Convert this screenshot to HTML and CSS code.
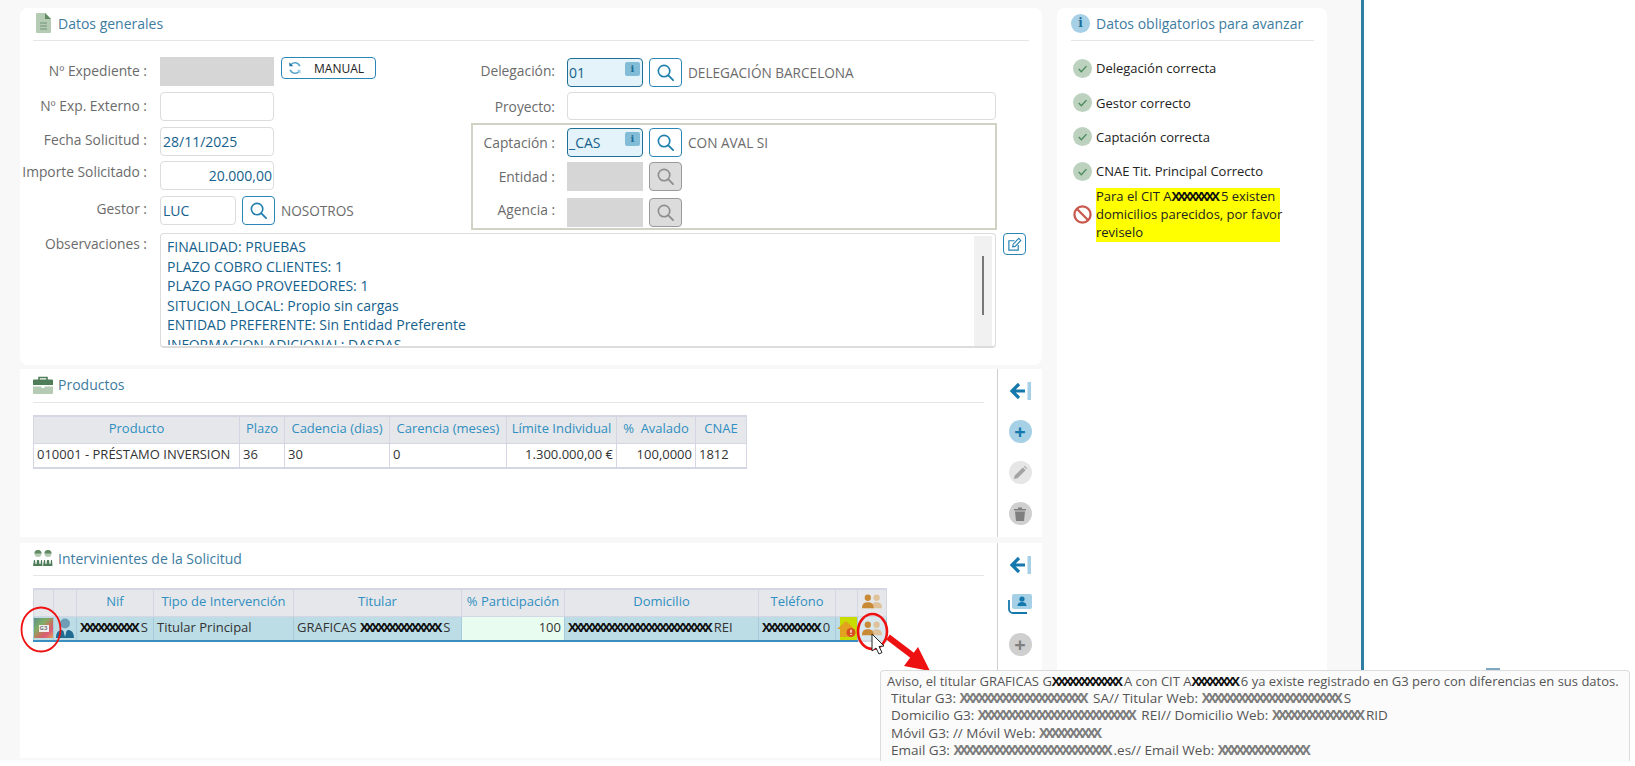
FILE: index.html
```html
<!DOCTYPE html>
<html lang="es">
<head>
  <meta charset="UTF-8" />
  <title>Solicitud</title>
  <link rel="stylesheet" href="styles.css">
</head>
<body>
  <svg class="defs" width="0" height="0">
    <defs>
      <symbol id="i-search" viewBox="0 0 20 20">
        <circle cx="8.5" cy="8.5" r="6" fill="none" stroke="currentColor" stroke-width="1.7"/>
        <path d="M13 13l5 5" stroke="currentColor" stroke-width="1.9" stroke-linecap="round"/>
      </symbol>
      <symbol id="i-check" viewBox="0 0 20 20">
        <circle cx="10" cy="10" r="10" fill="#bcd2bf"/>
        <path d="M6 10.5l2.8 2.8L14.2 7.5" fill="none" stroke="#4d8a5c" stroke-width="1.5"/>
      </symbol>
      <symbol id="i-back" viewBox="0 0 24 22">
        <path d="M11 4l-7 7 7 7M4 11h13" fill="none" stroke="#1578ad" stroke-width="3.2"/>
        <rect x="19.5" y="2" width="3.5" height="18" fill="#a5d0e6"/>
      </symbol>
      <symbol id="i-people" viewBox="0 0 24 18">
        <circle cx="17.500" cy="4.5" r="3.8" fill="#dfc29b"/>
        <path d="M11 17c0-5 2.500-7 6.500-7s6.500 2 6.500 7z" fill="#dfc29b"/>
        <circle cx="7" cy="4.500" r="3.800" fill="#c98a35"/>
        <path d="M0 17c0-5 2.500-7 7-7s7 2 7 7z" fill="#c98a35"/>
      </symbol>
    </defs>
  </svg>

  <div class="workspace">
    <div class="main-col">

      <section class="card card-general">
        <div class="card-title">
          <svg class="title-icon" width="15" height="20" viewBox="0 0 15 20"><path d="M1 0h8l6 6v13a1 1 0 0 1-1 1H1a1 1 0 0 1-1-1V1a1 1 0 0 1 1-1z" fill="#b5cbb4"/><path d="M9 0l6 6H9z" fill="#5f8a62"/><path d="M4 10h7M4 13h7M4 16h7" stroke="#6f9572" stroke-width="1"/></svg>
          Datos generales
        </div>

        <div class="form-top">
          <div class="form-left">
            <div class="field">
              <label class="lift-2">Nº Expediente :</label>
              <div class="input disabled w-full"></div>
              <div class="btn-manual">
                <svg width="14" height="14" viewBox="0 0 16 16"><path d="M13.500 6A6 6 0 0 0 3 4.500M2.500 10A6 6 0 0 0 13 11.500" fill="none" stroke="#5aa6cc" stroke-width="1.800"/><path d="M1.500 1.500v4.500h4.500z" fill="#1f77a8"/><path d="M14.500 14.500V10H10z" fill="#a9d2e6"/></svg>
                <span>MANUAL</span>
              </div>
            </div>
            <div class="field">
              <label class="lift-2">Nº Exp. Externo :</label>
              <div class="input w-full"></div>
            </div>
            <div class="field">
              <label class="lift-4">Fecha Solicitud :</label>
              <div class="input w-full">28/11/2025</div>
            </div>
            <div class="field">
              <label class="lift-8">Importe Solicitado :</label>
              <div class="input w-full right">20.000,00</div>
            </div>
            <div class="field">
              <label class="lift-4">Gestor :</label>
              <div class="input w-code">LUC</div>
              <div class="btn-search"><svg width="19" height="19"><use href="#i-search"/></svg></div>
              <span class="desc">NOSOTROS</span>
            </div>
          </div>

          <div class="form-right">
            <div class="field field-r">
              <label class="lift-4">Delegación:</label>
              <div class="input focus">01<span class="info-badge">i</span></div>
              <div class="btn-search"><svg width="19" height="19"><use href="#i-search"/></svg></div>
              <span class="desc">DELEGACIÓN BARCELONA</span>
            </div>
            <div class="field field-r field-proyecto">
              <label>Proyecto:</label>
              <div class="input grow"></div>
            </div>
            <div class="captacion">
              <div class="field field-r">
                <label>Captación :</label>
                <div class="input focus">_CAS<span class="info-badge">i</span></div>
                <div class="btn-search"><svg width="19" height="19"><use href="#i-search"/></svg></div>
                <span class="desc">CON AVAL SI</span>
              </div>
              <div class="field field-r">
                <label>Entidad :</label>
                <div class="input disabled w-code-r"></div>
                <div class="btn-search off"><svg width="19" height="19"><use href="#i-search"/></svg></div>
              </div>
              <div class="field field-r field-agencia">
                <label class="lift-6">Agencia :</label>
                <div class="input disabled w-code-r"></div>
                <div class="btn-search off"><svg width="19" height="19"><use href="#i-search"/></svg></div>
              </div>
            </div>
          </div>
        </div>

        <div class="obs-row">
          <label>Observaciones :</label>
          <div class="obs-box">
            <div class="obs-text">
              FINALIDAD: PRUEBAS<br>
              PLAZO COBRO CLIENTES: 1<br>
              PLAZO PAGO PROVEEDORES: 1<br>
              SITUCION_LOCAL: Propio sin cargas<br>
              ENTIDAD PREFERENTE: Sin Entidad Preferente<br>
              INFORMACION ADICIONAL: DASDAS
            </div>
            <div class="obs-scroll"><div class="obs-thumb"></div></div>
          </div>
          <div class="btn-edit">
            <svg width="15" height="15" viewBox="0 0 16 16"><path d="M12 8.500V14H2V4h6" fill="none" stroke="#2a86b5" stroke-width="1.300"/><path d="M6 10.500l.6-2.800L12.500 1.500l2.200 2.200L8.800 10z" fill="none" stroke="#2a86b5" stroke-width="1.200"/></svg>
          </div>
        </div>
      </section>

      <section class="card card-products with-rail">
        <div class="card-main">
          <div class="card-title title-tall">
            <svg class="title-icon" width="20" height="18" viewBox="0 0 20 18"><path d="M6 4V1.500h8V4" fill="none" stroke="#4f7d58" stroke-width="1.600"/><path d="M1 3.500h18a1 1 0 0 1 1 1V9H0V4.500a1 1 0 0 1 1-1z" fill="#4f7d58"/><path d="M0 10.500h8.500v1.500h3v-1.500H20V17a1 1 0 0 1-1 1H1a1 1 0 0 1-1-1z" fill="#b5cbb4"/></svg>
            Productos
          </div>
          <table class="grid grid-products">
            <tr>
              <th class="p1">Producto</th><th class="p2">Plazo</th><th class="p3">Cadencia (dias)</th><th class="p4">Carencia (meses)</th><th class="p5">Límite Individual</th><th class="p6">%&nbsp; Avalado</th><th class="p7">CNAE</th>
            </tr>
            <tr>
              <td>010001 - PRÉSTAMO INVERSION</td><td>36</td><td>30</td><td>0</td><td class="right">1.300.000,00 €</td><td class="right">100,0000</td><td>1812</td>
            </tr>
          </table>
        </div>
        <div class="rail">
          <svg width="24" height="22"><use href="#i-back"/></svg>
          <div class="round add">+</div>
          <div class="round light">
            <svg width="13" height="13" viewBox="0 0 14 14"><path d="M0 14l.8-3.800L9.500 1.500l3 3L3.800 13.200zM10.500.5l1-.5 2.500 2.500-.5 1z" fill="#a3a3a3"/></svg>
          </div>
          <div class="round mid">
            <svg width="12" height="14" viewBox="0 0 12 14"><path d="M0 2h4V.5h4V2h4v1.500H0zM1 4.500h10L10 14H2z" fill="#7f7f7f"/></svg>
          </div>
        </div>
      </section>

      <section class="card card-people with-rail">
        <div class="card-main">
          <div class="card-title">
            <svg class="title-icon" width="20" height="16" viewBox="0 0 20 16"><circle cx="5" cy="3.500" r="3.500" fill="#b5cbb4"/><circle cx="15" cy="3.500" r="3.500" fill="#b5cbb4"/><path d="M1.500 3.500a3.500 3.500 0 0 1 7 0zM11.500 3.500a3.500 3.500 0 0 1 7 0z" fill="#5f8a62"/><path d="M0 16l1-6h1l.5 4h1l.5-4h2l.5 4h1l.5-4h1l.5 6zM10 16l1-6h1l.5 4h1l.5-4h2l.5 4h1l.5-4h1l.5 6z" fill="#4f7d58"/></svg>
            Intervinientes de la Solicitud
          </div>
          <table class="grid grid-people">
            <tr>
              <th class="h1"></th><th class="h2"></th><th class="h3">Nif</th><th class="h4">Tipo de Intervención</th><th class="h5">Titular</th><th class="h6">% Participación</th><th class="h7">Domicilio</th><th class="h8">Teléfono</th><th class="h9"></th>
              <th class="h10"><svg class="people-icon" width="20" height="15"><use href="#i-people"/></svg></th>
            </tr>
            <tr class="selected">
              <td class="icon-cell"><div class="g3-tile"><span>G3</span></div></td>
              <td class="icon-cell">
                <svg width="18" height="20" viewBox="0 0 18 20"><circle cx="9" cy="5.500" r="5" fill="#6f9db5"/><path d="M0 20c0-6 3-8 6-8l1.500 1L9 19l1.500-6 1.500-1c3 0 6 2 6 8z" fill="#1f6b94"/></svg>
              </td>
              <td><span class="redact">XXXXXXXXXX</span>S</td>
              <td>Titular Principal</td>
              <td>GRAFICAS <span class="redact">XXXXXXXXXXXXXX</span>S</td>
              <td class="right pct">100</td>
              <td><span class="redact">XXXXXXXXXXXXXXXXXXXXXXXXX</span>REI</td>
              <td><span class="redact">XXXXXXXXXX</span>0</td>
              <td class="icon-cell">
                <div class="home-mark">
                  <svg width="20" height="18" viewBox="0 0 20 18"><path d="M0 9l9-8 7 6.500V17H3V9z" fill="#e2a21f"/><circle cx="14" cy="12.500" r="4.500" fill="#d8501f"/><path d="M14 9.800v3M14 14v1" stroke="#fff" stroke-width="1.300"/></svg>
                </div>
              </td>
              <td class="icon-cell hover-cell"><svg class="people-icon" width="20" height="15"><use href="#i-people"/></svg></td>
            </tr>
          </table>
        </div>
        <div class="rail">
          <svg width="24" height="22"><use href="#i-back"/></svg>
          <svg class="contact-icon" width="24" height="20" viewBox="0 0 24 20"><rect x="4" y="0" width="20" height="15" rx="2" fill="#a5d0e6"/><circle cx="14" cy="5" r="2.600" fill="#1578ad"/><path d="M9.500 12c0-3 2-4 4.500-4s4.500 1 4.500 4z" fill="#1578ad"/><path d="M1 6v9a4 4 0 0 0 4 4h14" fill="none" stroke="#1578ad" stroke-width="1.800"/></svg>
          <div class="round mid plus-off">+</div>
        </div>
      </section>
    </div>

    <aside class="card card-required">
      <div class="card-title">
        <span class="info-round">i</span>
        Datos obligatorios para avanzar
      </div>
      <ul class="checks">
        <li><svg width="19" height="19"><use href="#i-check"/></svg>Delegación correcta</li>
        <li><svg width="19" height="19"><use href="#i-check"/></svg>Gestor correcto</li>
        <li><svg width="19" height="19"><use href="#i-check"/></svg>Captación correcta</li>
        <li><svg width="19" height="19"><use href="#i-check"/></svg>CNAE Tit. Principal Correcto</li>
        <li class="warn">
          <svg width="19" height="19" viewBox="0 0 20 20"><circle cx="10" cy="10" r="8.500" fill="none" stroke="#c9594f" stroke-width="2.400"/><path d="M4 4l12 12" stroke="#c9594f" stroke-width="2.400"/></svg>
          <div class="warn-text"><div class="warn-lines">Para el CIT A<span class="redact">XXXXXXXX</span>5 existen<br>domicilios parecidos, por favor<br>reviselo</div></div>
        </li>
      </ul>
    </aside>
  </div>

  <svg class="annotations" width="1635" height="766" viewBox="0 0 1635 766">
    <ellipse cx="41" cy="629.500" rx="19.500" ry="22" fill="none" stroke="#ee1111" stroke-width="1.800"/>
    <ellipse cx="872.500" cy="631.500" rx="14.500" ry="17.500" fill="none" stroke="#ee1111" stroke-width="2.600"/>
    <path d="M888 637l29 22" stroke="#ee1111" stroke-width="6"/>
    <path d="M930 671l-26-5 14-19z" fill="#ee1111"/>
    <path d="M872 634v17l4-3 3 6 3-1.500-3-6 5-.5z" fill="#fff" stroke="#222" stroke-width="1"/>
    <rect x="1486" y="668" width="14" height="2" fill="#7fa9c2"/>
  </svg>

  <div class="tooltip">
    <div class="tip-first">Aviso, el titular GRAFICAS G<span class="redact">XXXXXXXXXXXX</span>A con CIT A<span class="redact">XXXXXXXX</span>6 <span class="tip-tail">ya existe registrado en G3 pero con diferencias en sus datos.</span></div>
    <div>Titular G3: <span class="redact soft">XXXXXXXXXXXXXXXXXXXXX</span> SA// Titular Web: <span class="redact soft">XXXXXXXXXXXXXXXXXXXXXXX</span>S</div>
    <div>Domicilio G3: <span class="redact soft">XXXXXXXXXXXXXXXXXXXXXXXXXX</span> REI// Domicilio Web: <span class="redact soft">XXXXXXXXXXXXXXX</span>RID</div>
    <div>Móvil G3: // Móvil Web: <span class="redact soft">XXXXXXXXXX</span></div>
    <div>Email G3: <span class="redact soft">XXXXXXXXXXXXXXXXXXXXXXXXXX</span>.es// Email Web: <span class="redact soft">XXXXXXXXXXXXXXX</span></div>
  </div>
</body>
</html>
```

FILE: styles.css
```css
* {
  box-sizing: border-box;
}

body {
  margin: 0;
  width: 1635px;
  height: 766px;
  overflow: hidden;
  position: relative;
  background-color: #ffffff;
  font-family: "Open Sans", Arial, sans-serif;
  font-size: 14px;
  color: #333;
}

.defs {
  position: absolute;
}

.workspace {
  display: flex;
  width: 1364px;
  height: 760px;
  padding: 8px 0 0 20px;
  background-color: #f8f8f8;
  border-right: 3px solid #2f7fa5;
}

.main-col {
  width: 1022px;
  display: flex;
  flex-direction: column;
}

.card {
  background-color: #ffffff;
}

.card-title {
  display: flex;
  align-items: center;
  gap: 5px;
  height: 33px;
  padding-bottom: 2px;
  color: #3d7c9f;
  font-size: 14px;
  border-bottom: 1px solid #e6e6e6;
}

.title-tall {
  height: 34px;
}

.title-icon {
  flex-shrink: 0;
}

/* datos generales */
.card-general {
  height: 357px;
  padding: 0 13px;
  border-radius: 8px;
}

.card-general .card-title {
  gap: 7px;
  padding-left: 3px;
}

.form-top {
  display: flex;
  margin: 16px 0 0 -13px;
}

.form-left {
  width: 451px;
  display: flex;
  flex-direction: column;
  gap: 5.75px;
}

.form-right {
  width: 526px;
  padding-top: 1px;
  display: flex;
  flex-direction: column;
}

.field {
  display: flex;
  align-items: center;
  height: 29px;
}

.field label,
.obs-row label {
  width: 127px;
  margin-right: 13px;
  text-align: right;
  color: #6b6b6b;
  font-size: 13.800px;
  white-space: nowrap;
}

.lift-2 { padding-bottom: 2px; }
.lift-4 { padding-bottom: 4px; }
.lift-6 { padding-bottom: 6px; }
.lift-8 { padding-bottom: 8px; }

.field-r label {
  width: 84px;
  margin-right: 12px;
}

.captacion .field-r label {
  width: 82px;
}

.input {
  height: 29px;
  padding: 0 1px 0 2px;
  display: flex;
  align-items: center;
  background-color: #fff;
  border: 1px solid #dcdcdc;
  border-radius: 4px;
  color: #15618c;
  position: relative;
}

.w-full {
  width: 114px;
}

.w-code {
  width: 76px;
}

.w-code-r {
  width: 76px;
}

.grow {
  flex: 1;
}

.right {
  justify-content: flex-end;
  text-align: right;
}

.disabled {
  background-color: #d6d6d6;
  border-color: #d6d6d6;
  border-radius: 0;
}

.focus {
  width: 76px;
  padding: 0 1px;
  background-color: #e3f3f9;
  border: 1px solid #1f6f96;
  color: #15618c;
}

.info-badge {
  position: absolute;
  right: 2px;
  top: 3px;
  width: 15px;
  height: 14px;
  background-color: #83bcd6;
  border-radius: 2px;
  color: #1f6f96;
  font-family: "DejaVu Serif", serif;
  font-size: 10px;
  font-weight: bold;
  line-height: 14px;
  text-align: center;
}

.btn-manual {
  width: 95px;
  height: 22px;
  margin: -7px 0 0 7px;
  padding-left: 6px;
  display: flex;
  align-items: center;
  border: 1px solid #2a86b5;
  border-radius: 4px;
  color: #222;
  font-size: 12px;
}

.btn-manual span {
  margin-left: 12px;
}

.btn-search {
  width: 33px;
  height: 29px;
  margin-left: 6px;
  display: flex;
  align-items: center;
  justify-content: center;
  border: 1px solid #2a86b5;
  border-radius: 4px;
  color: #1f7fae;
}

.btn-search.off {
  background-color: #dcdcdc;
  border-color: #9a9a9a;
  color: #8d8d8d;
}

.desc {
  margin-left: 6px;
  color: #6b6b6b;
  font-size: 13.600px;
  white-space: nowrap;
}

.field-proyecto {
  height: 28px;
  margin-top: 5px;
}

.field-proyecto .input {
  height: 28px;
  margin-right: 1px;
}

.captacion {
  height: 107px;
  margin-top: 3px;
  padding: 3px 0 0;
  display: flex;
  flex-direction: column;
  gap: 5px;
  border: 2px solid #d2d2c4;
}

.field-agencia {
  margin-top: 2px;
}

.obs-row {
  display: flex;
  margin: 3px 0 0 -13px;
}

.obs-row label {
  line-height: 22px;
}

.obs-box {
  width: 836px;
  height: 115px;
  padding: 2px 3px 2px 6px;
  display: flex;
  justify-content: space-between;
  border: 1px solid #dcdcdc;
  border-bottom-width: 2px;
  border-radius: 4px;
}

.obs-text {
  height: 109px;
  overflow: hidden;
  color: #15618c;
  line-height: 19.500px;
  padding-top: 1px;
  white-space: nowrap;
}

.obs-scroll {
  width: 18px;
  height: 110px;
  padding: 20px 0 0 8px;
  background-color: #f1f1f1;
}

.obs-thumb {
  width: 2px;
  height: 59px;
  background-color: #777;
}

.btn-edit {
  width: 23px;
  height: 22px;
  margin-left: 7px;
  display: flex;
  align-items: center;
  justify-content: center;
  border: 1px solid #2a86b5;
  border-radius: 4px;
}

/* productos e intervinientes */
.with-rail {
  display: flex;
}

.card-products {
  height: 168px;
  margin-top: 4px;
}

.card-people {
  height: 215px;
  margin-top: 6px;
}

.card-main {
  width: 977px;
  padding: 0 13px;
}

.rail {
  width: 45px;
  padding-top: 11px;
  display: flex;
  flex-direction: column;
  align-items: center;
  gap: 18px;
  border-left: 1px solid #cfcfcf;
}

.round {
  width: 23px;
  height: 23px;
  border-radius: 50%;
  display: flex;
  align-items: center;
  justify-content: center;
  font-size: 20px;
  font-weight: bold;
  line-height: 1;
}

.add {
  background-color: #a5d0e6;
  color: #1578ad;
}

.light {
  background-color: #e6e6e6;
}

.mid {
  background-color: #cfcfcf;
}

.plus-off {
  color: #7f7f7f;
  margin-top: 1px;
}

.grid {
  margin-top: 12px;
  border-collapse: collapse;
  table-layout: fixed;
  border: 1px solid #d5d6e4;
  border-top-width: 2px;
  border-bottom-width: 2px;
  font-size: 13px;
}

.grid-products {
  width: 713px;
}

.grid-people {
  width: 853px;
}

.grid th {
  height: 27px;
  padding: 0 0 3px;
  background-color: #e6e7eb;
  border: 1px solid #d5d6e4;
  color: #2f8fc0;
  font-weight: normal;
  white-space: nowrap;
}

.grid td {
  height: 25px;
  padding: 0 3px 3px;
  border: 1px solid #d5d6e4;
  color: #333;
  white-space: nowrap;
  overflow: hidden;
}

.p1 { width: 206px; }
.p2 { width: 45px; }
.p3 { width: 105px; }
.p4 { width: 117px; }
.p5 { width: 110px; }
.p6 { width: 79px; }
.p7 { width: 51px; }

.h1 { width: 20px; }
.h2 { width: 23px; }
.h3 { width: 77px; }
.h4 { width: 140px; }
.h5 { width: 168px; }
.h6 { width: 103px; }
.h7 { width: 194px; }
.h8 { width: 77px; }
.h9 { width: 22px; }
.h10 { width: 29px; }

.grid-people .selected td {
  background-color: #bcdce6;
  border-color: #a8cbdb;
  border-bottom: 2px solid #3a8fc0;
}

.grid-people .selected .pct {
  background-color: #e8fcf0;
}

.grid-people .selected .hover-cell {
  background-color: #d9e8ef;
  border-bottom-color: #d5d6e4;
}

.grid-people td.icon-cell {
  padding: 0;
  text-align: center;
  vertical-align: middle;
}

.grid-people svg {
  display: block;
  margin: 0 auto;
}

.people-icon {
  display: block;
  margin: 0 auto;
}

.g3-tile {
  width: 19px;
  height: 20px;
  margin: 0 auto;
  display: flex;
  align-items: center;
  justify-content: center;
  background: linear-gradient(135deg, #5f8f8a 0%, #7fae66 35%, #c9705f 60%, #dc5a78 75%, #e2a850 100%);
}

.g3-tile span {
  width: 10px;
  background-color: #efefef;
  color: #777;
  font-size: 6px;
  font-weight: bold;
  line-height: 7px;
  text-align: center;
}

.home-mark {
  width: 17px;
  height: 23px;
  margin-left: 4px;
  padding-top: 3px;
  background-color: #c8dc00;
}

.home-mark svg {
  margin-left: -3px;
}

.redact {
  color: #111;
  font-weight: bold;
  letter-spacing: -3px;
  padding-right: 4px;
}

.redact.soft {
  color: #7d7d7d;
}

/* datos obligatorios */
.card-required {
  width: 270px;
  margin-left: 15px;
  padding: 0 13px 0 14px;
  border-radius: 8px 8px 0 0;
}

.info-round {
  width: 19px;
  height: 19px;
  border-radius: 50%;
  background-color: #a5d0e6;
  color: #1f6f96;
  font-family: "DejaVu Serif", serif;
  font-size: 12px;
  font-weight: bold;
  line-height: 19px;
  text-align: center;
}

.card-required .card-title {
  gap: 6px;
}

.checks {
  list-style: none;
  margin: 10px 0 0;
  padding: 0 0 0 2px;
  font-size: 13px;
  color: #222;
}

.checks li {
  display: flex;
  align-items: center;
  gap: 4px;
  height: 34.400px;
}

.checks .warn {
  height: 54px;
  margin-top: -1px;
}

.warn-text {
  width: 184px;
  height: 54px;
  background-color: #ffff00;
  line-height: 18px;
  white-space: nowrap;
}

.warn-lines {
  margin-top: -1px;
}

/* anotaciones sobre la captura */
.annotations {
  position: absolute;
  left: 0;
  top: 0;
  pointer-events: none;
}

.tooltip {
  position: absolute;
  left: 880px;
  top: 670px;
  width: 750px;
  height: 91px;
  padding: 2px 0 0 10px;
  background-color: #fbfbfb;
  border: 1px solid #dcdcdc;
  border-bottom: 0;
  border-radius: 4px 4px 0 0;
  color: #555;
  font-size: 13.500px;
  line-height: 17.200px;
  white-space: nowrap;
}

.tip-first {
  margin-left: -4px;
  font-size: 13px;
}
```
